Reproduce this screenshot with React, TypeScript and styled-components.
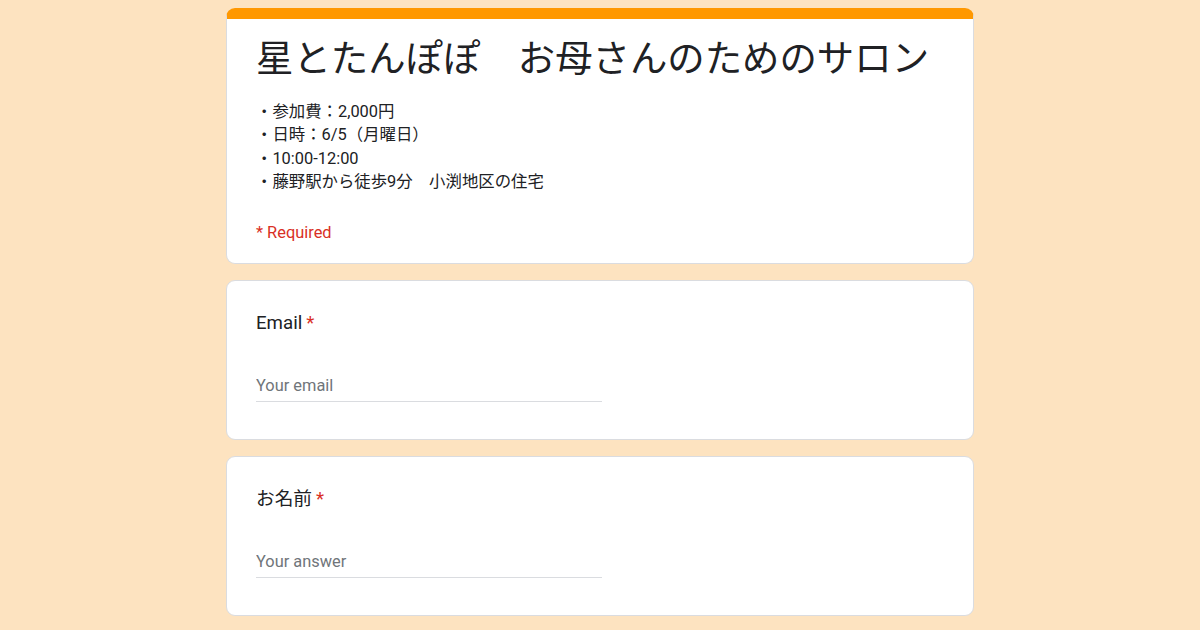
import React from "react";
import styled, { createGlobalStyle } from "styled-components";

const COLORS = {
  PAGE: "#fde3c0",
  ORANGE: "#ff9800",
  WHITE: "#ffffff",
  BORDER: "#dadce0",
  TEXT: "#202124",
  MUTED: "#70757a",
  RED: "#d93025",
};

const FONT = `Roboto, "Noto Sans CJK JP", "Noto Sans", sans-serif`;

const GlobalStyle = createGlobalStyle`
  html, body {
    margin: 0;
    padding: 0;
    background-color: ${COLORS.PAGE};
    font-family: ${FONT};
    color: ${COLORS.TEXT};
  }
`;

const details = [
  "・参加費：2,000円",
  "・日時：6/5（月曜日）",
  "・10:00-12:00",
  "・藤野駅から徒歩9分　小渕地区の住宅",
];

interface QuestionProps {
  label: string;
  placeholder: string;
}

const Question: React.FC<QuestionProps> = ({ label, placeholder }) => (
  <StyledCard>
    <StyledLabel>
      {label}
      <StyledStar>*</StyledStar>
    </StyledLabel>
    <StyledInput placeholder={placeholder} />
  </StyledCard>
);

const App: React.FC = () => {
  return (
    <>
      <GlobalStyle />
      <StyledPage>
        <StyledHeaderCard>
          <StyledTitle>星とたんぽぽ　お母さんのためのサロン</StyledTitle>
          <StyledDetails>
            {details.map((line, index) => (
              <div key={index}>{line}</div>
            ))}
          </StyledDetails>
          <StyledRequired>* Required</StyledRequired>
        </StyledHeaderCard>
        <Question label="Email" placeholder="Your email" />
        <Question label="お名前" placeholder="Your answer" />
      </StyledPage>
    </>
  );
};

export default App;

const StyledPage = styled.main`
  width: 748px;
  margin: 8px auto 0;
  display: flex;
  flex-direction: column;
  gap: 16px;
`;

const StyledCardBase = styled.section`
  box-sizing: border-box;
  background-color: ${COLORS.WHITE};
  border: 1px solid ${COLORS.BORDER};
  border-radius: 9px;
  padding: 0 29px;
`;

const StyledHeaderCard = styled(StyledCardBase)`
  height: 256px;
  border-top: 11px solid ${COLORS.ORANGE};
  padding-top: 16px;
`;

const StyledTitle = styled.h1`
  margin: 0;
  font-size: 37.4px;
  font-weight: 400;
  line-height: 48px;
`;

const StyledDetails = styled.div`
  margin-top: 17px;
  font-size: 16.4px;
  line-height: 23.4px;
`;

const StyledRequired = styled.div`
  margin-top: 29px;
  font-size: 16.4px;
  line-height: 20px;
  color: ${COLORS.RED};
`;

const StyledCard = styled(StyledCardBase)`
  height: 160px;
  padding-top: 28px;
`;

const StyledLabel = styled.div`
  font-size: 18.7px;
  line-height: 28px;
  color: ${COLORS.TEXT};
`;

const StyledStar = styled.span`
  color: ${COLORS.RED};
  margin-left: 4px;
`;

const StyledInput = styled.input`
  display: block;
  box-sizing: border-box;
  width: 346px;
  margin-top: 38px;
  padding: 0 0 4px;
  border: none;
  border-bottom: 1px solid ${COLORS.BORDER};
  outline: none;
  background: transparent;
  font-family: ${FONT};
  font-size: 16.4px;
  line-height: 22px;
  color: ${COLORS.TEXT};

  &::placeholder {
    color: ${COLORS.MUTED};
  }
`;
